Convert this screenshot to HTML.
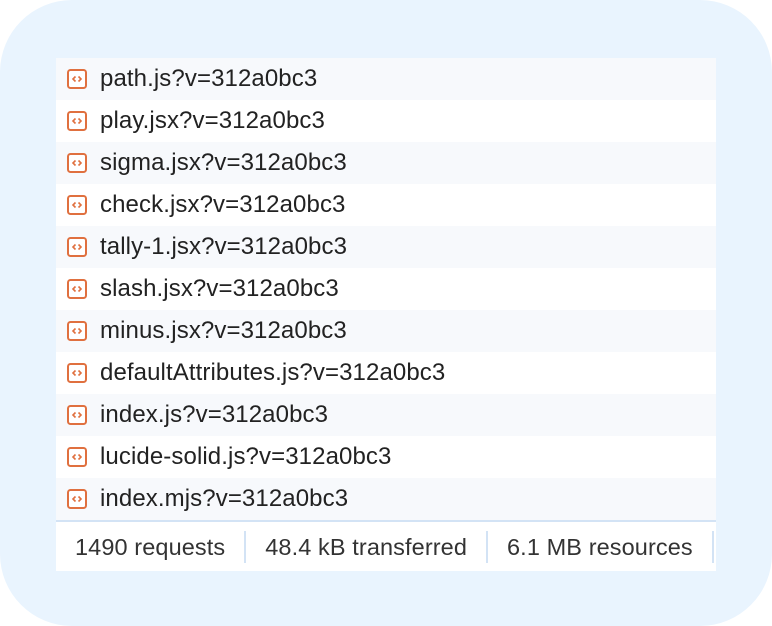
<!DOCTYPE html>
<html><head><style>
body{margin:0;width:772px;height:626px;background:#fff;font-family:"Liberation Sans",Arial,sans-serif;overflow:hidden}
.bg{position:absolute;left:0;top:0;width:772px;height:626px;background:#e9f4fe;border-radius:72px}
.panel{position:absolute;left:56px;top:58px;width:660px}
.row{height:42px;display:flex;align-items:center;font-size:24px;letter-spacing:0.1px;color:#222;background:#f7f9fc}
.row:nth-child(even){background:#fff}
.row svg{margin-left:11px;margin-right:13px;flex:none}
.foot{height:49px;border-top:2px solid #d3e3f5;background:#fff;display:flex;align-items:center;font-size:23.5px;letter-spacing:0.1px;color:#333;white-space:nowrap;overflow:hidden}
.foot span{flex:none;padding:0 19px;border-right:2px solid #d3e3f5;height:32px;line-height:32px}
</style></head><body>
<div class="bg"></div>
<svg width="0" height="0" style="position:absolute"><defs><symbol id="i" viewBox="0 0 20 20"><rect x="1" y="1" width="18" height="18" rx="2.5" fill="#fff" stroke="#e0703f" stroke-width="2"/><path d="M8.5 7.5 6 10l2.5 2.5M11.5 7.5 14 10l-2.5 2.5" fill="none" stroke="#e0703f" stroke-width="1.6"/></symbol></defs></svg>
<div class="panel">
<div class="row"><svg width="20" height="20"><use href="#i"/></svg>path.js?v=312a0bc3</div>
<div class="row"><svg width="20" height="20"><use href="#i"/></svg>play.jsx?v=312a0bc3</div>
<div class="row"><svg width="20" height="20"><use href="#i"/></svg>sigma.jsx?v=312a0bc3</div>
<div class="row"><svg width="20" height="20"><use href="#i"/></svg>check.jsx?v=312a0bc3</div>
<div class="row"><svg width="20" height="20"><use href="#i"/></svg>tally-1.jsx?v=312a0bc3</div>
<div class="row"><svg width="20" height="20"><use href="#i"/></svg>slash.jsx?v=312a0bc3</div>
<div class="row"><svg width="20" height="20"><use href="#i"/></svg>minus.jsx?v=312a0bc3</div>
<div class="row"><svg width="20" height="20"><use href="#i"/></svg>defaultAttributes.js?v=312a0bc3</div>
<div class="row"><svg width="20" height="20"><use href="#i"/></svg>index.js?v=312a0bc3</div>
<div class="row"><svg width="20" height="20"><use href="#i"/></svg>lucide-solid.js?v=312a0bc3</div>
<div class="row"><svg width="20" height="20"><use href="#i"/></svg>index.mjs?v=312a0bc3</div>
<div class="foot"><span>1490 requests</span><span>48.4 kB transferred</span><span>6.1 MB resources</span></div>
</div>
</body></html>
